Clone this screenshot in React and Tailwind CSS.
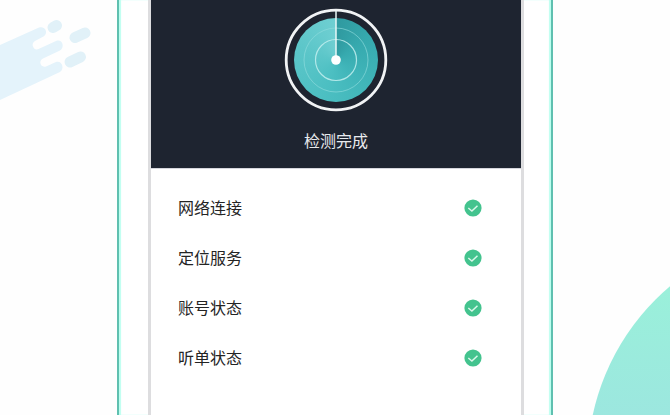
const CHECKS = ['网络连接', '定位服务', '账号状态', '听单状态'];

/** Meteor — pale streak in the top left corner of the page. */
function Meteor() {
  return (
    <svg className="absolute left-0 top-0" width="100" height="110" viewBox="0 0 100 110" fill="none" aria-hidden="true">
      <path
        d="M0 45 L39 27.6 C45 25.5 49 33 43.5 36.5 L35 41 C30.5 43.5 33 50.5 38 49.3 L56 41 C62 38.5 65.5 47 60 50.5 L43 58.6 C38 61 40.5 68 46 66.5 L56 62 C62 60 65 68.5 60 72 L0 100 Z"
        fill="#e4f3fb"
      />
      <g stroke="#e1f1f8" strokeWidth="11" strokeLinecap="round">
        <path d="M53 27.500 L56.500 25.500" />
        <path d="M75 37.500 L85 33" />
        <path d="M70 62 L80.500 57" />
      </g>
    </svg>
  );
}

/** CornerDisc — big mint circle, cut off by the bottom right corner. */
function CornerDisc() {
  return (
    <svg className="absolute bottom-0 right-0" width="90" height="145" viewBox="580 270 90 145" aria-hidden="true">
      <defs>
        <linearGradient id="disc" gradientUnits="userSpaceOnUse" x1="0" y1="286" x2="0" y2="415">
          <stop offset="0" stopColor="#9af0da" />
          <stop offset="1" stopColor="#9ce7df" />
        </linearGradient>
      </defs>
      <circle cx="820" cy="464" r="232.500" fill="url(#disc)" />
    </svg>
  );
}

/** Radar — sweep disc with the rings and the needle drawn over it. */
function Radar() {
  return (
    <div className="grid size-[104px] place-items-center">
      <div className="col-start-1 row-start-1 size-[84px] rounded-full bg-[conic-gradient(#2f999f,#36a9ae_15%,#40b5b9_35%,#4cbfc2_55%,#5cc6c9_80%,#6fcfd2)]" />
      <svg className="col-start-1 row-start-1" width="104" height="104" viewBox="0 0 104 104" fill="none" aria-hidden="true">
        <circle cx="52" cy="52" r="49.800" stroke="#f1f3f5" strokeWidth="2.800" />
        <circle cx="52" cy="52" r="32" stroke="#8fdcdd" strokeOpacity="0.65" strokeWidth="1" />
        <circle cx="52" cy="52" r="20.500" stroke="#c2eeee" strokeOpacity="0.85" strokeWidth="1.200" />
        <path d="M52 3 V52" stroke="#e9f7f7" strokeWidth="1.500" />
        <circle cx="52" cy="52" r="4.800" fill="#ffffff" />
      </svg>
    </div>
  );
}

function CheckBadge() {
  return (
    <svg width="18" height="18" viewBox="0 0 18 18" fill="none" aria-hidden="true">
      <circle cx="9" cy="9" r="8.600" fill="#43c38e" />
      <path d="M4.300 9 L7.900 12 L13.500 6.700" stroke="#d9f7ea" strokeWidth="1.500" />
    </svg>
  );
}

export default function App() {
  return (
    <div
      className="relative flex min-h-screen justify-center overflow-hidden bg-[#fefefe]"
      style={{ fontFamily: '"Noto Sans CJK SC", sans-serif' }}
    >
      <Meteor />
      <CornerDisc />

      <div className="relative flex w-full max-w-[436px] border-x-2 border-[#5fc0b0] bg-white pl-[29px] pr-[27px] shadow-[inset_2px_0_1px_#bdfff0,inset_-2px_0_1px_#bdfff0]">
        <main className="flex-1 border-x-3 border-[#dddddf] bg-white">
          <header className="flex flex-col items-center border-b border-[#d5d6dc] bg-[#1e2430] pb-4 pt-2 text-[#e8eaed]">
            <Radar />
            <h1 className="mt-4 text-base leading-6">检测完成</h1>
          </header>

          <ul className="pl-[27px] pr-[39px] pt-[14px]">
            {CHECKS.map((name) => (
              <li key={name} className="flex h-[50px] items-center justify-between text-base text-[#242424]">
                <span className="pb-0.5">{name}</span>
                <CheckBadge />
              </li>
            ))}
          </ul>
        </main>
      </div>
    </div>
  );
}
